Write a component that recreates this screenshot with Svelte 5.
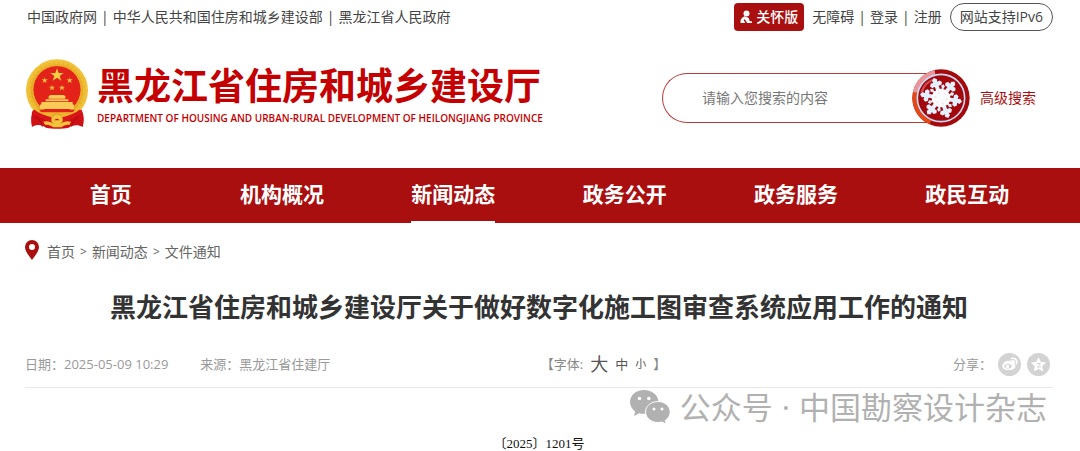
<script lang="ts">
  const siteLinks = ['中国政府网', '中华人民共和国住房和城乡建设部', '黑龙江省人民政府']
  const userLinks = ['无障碍', '登录', '注册']
  const navItems = ['首页', '机构概况', '新闻动态', '政务公开', '政务服务', '政民互动']
  const crumbs = ['首页', '新闻动态', '文件通知']
  const arms = [0, 60, 120, 180, 240, 300]

  let active = $state('新闻动态')
  let keyword = $state('')
</script>

<div class="page">
  <div class="topbar wrap">
    <div class="links">
      {#each siteLinks as link, i}
        {#if i > 0}<span>|</span>{/if}
        <a href="#site">{link}</a>
      {/each}
    </div>
    <div class="links">
      <button class="care" type="button">
        <svg width="12" height="14" viewBox="0 0 12 14" fill="#fff" aria-hidden="true">
          <circle cx="6.500" cy="3.400" r="3" />
          <path d="M4.500 6.200C2 7.500.5 9 .5 11.500V13h4.800L3.600 9.800l1.200-.6 2.400 3.800H12v-1.600l-2.400-.5-.8-3z" />
        </svg>
        关怀版
      </button>
      {#each userLinks as link, i}
        {#if i > 0}<span>|</span>{/if}
        <a href="#user">{link}</a>
      {/each}
      <a class="pill" href="#ipv6">网站支持IPv6</a>
    </div>
  </div>

  <header class="header wrap">
    <a class="brand" href="#home">
      <svg width="64" height="70" viewBox="30 24 192 210" aria-hidden="true">
        <path d="M56 172c-8 18-10 38-5 56 14-8 28-8 42 2 20 4 48 4 68 0 14-8 28-10 42-2 6-18 4-40-6-56z" fill="#cf1015" />
        <circle cx="126" cy="118" r="89" fill="#e6ab23" stroke="#f0c33a" stroke-width="8" />
        <circle cx="126" cy="118" r="82" fill="none" stroke="#eebc35" stroke-width="8" stroke-dasharray="12 2" />
        <circle cx="126" cy="116" r="72" fill="#e3221a" stroke="#f3c433" stroke-width="2" />
        <path d="M126 52l5 14h15l-12 9 5 14-13-9-13 9 5-14-12-9h15z" fill="#f6cf45" />
        <g fill="#f0b93a">
          <path id="star" d="M89 79l2 6h7l-5 4 2 7-6-4-6 4 2-7-5-4h7z" />
          <use href="#star" x="75" />
          <use href="#star" x="22" y="22" />
          <use href="#star" x="52" y="22" />
        </g>
        <path d="M101 135l6-3h38l6 3v8h-50zM92 145h68v6H92zM79 153h94v6l4 3v12H75v-12l4-3z" fill="#f7cb55" />
        <path d="M72 176h108l-8 9H80z" fill="#e3221a" />
        <path d="M75 184h102c-14 15-30 19-51 19s-37-4-51-19z" fill="#efb42c" />
        <path d="M54 180c16 14 36 20 56 25M198 180c-16 14-36 20-56 25" fill="none" stroke="#d8161a" stroke-width="12" />
        <path d="M62 194c10 10 18 20 20 33M190 194c-10 10-18 20-20 33" fill="none" stroke="#a90c10" stroke-width="3" />
        <circle cx="126" cy="206" r="17" fill="#f3c33b" stroke="#d08c1c" stroke-width="2" />
        <path d="M118 208a9 9 0 0 1 16 0z" fill="#d8161a" />
        <path d="M85 212c12-4 22 0 30 6h22c8-6 18-10 31-6l-5 10c-10-2-16 2-24 7h-24c-8-5-15-9-25-7z" fill="#f3c33b" />
      </svg>
      <span class="names">
        <strong>黑龙江省住房和城乡建设厅</strong>
        <small>DEPARTMENT OF HOUSING AND URBAN-RURAL DEVELOPMENT OF HEILONGJIANG PROVINCE</small>
      </span>
    </a>
    <form class="search" onsubmit={(event) => event.preventDefault()}>
      <input type="search" aria-label="搜索" placeholder="请输入您搜索的内容" bind:value={keyword} />
      <button type="submit" aria-label="搜索">
        <svg width="58" height="58" viewBox="21 21 174 174" aria-hidden="true">
          <circle cx="108" cy="108" r="86" fill="#a5090c" />
          <path d="M24 90a86 86 0 0 0 50 97l5-13a72 72 0 0 1-41-83z" fill="#e44718" />
          <path d="M24 90a86 86 0 0 1 65-66l2 15a72 72 0 0 0-53 53z" fill="#eb969b" />
          <circle cx="108" cy="108" r="71" fill="#a3070b" stroke="#c5dcf7" stroke-width="5" />
          <path d="M46 91a62 62 0 0 1 45-43l1 6a54 54 0 0 0-39 39z" fill="#cf5054" />
          <g fill="#e3f0ff">
            {#each arms as angle}
              <path
                d="M102 84V71h-9l-4-7 5-7 8 1-2-7 8-7 8 7-2 7 8-1 5 7-4 7h-9v13z"
                transform="rotate({angle - 20} 108 108)"
              />
              <path d="M108 66l6 6-3 5v10h-6V77l-3-5z" transform="rotate({angle + 10} 108 108)" />
            {/each}
          </g>
          <circle cx="108" cy="108" r="28" fill="#f9fbff" />
          <g stroke="#f3cbc4" stroke-width="2">
            {#each arms as angle}
              <path d="M108 87v7" transform="rotate({angle - 20} 108 108)" />
            {/each}
          </g>
        </svg>
      </button>
      <a href="#advanced">高级搜索</a>
    </form>
  </header>

  <nav class="nav">
    <ul class="wrap">
      {#each navItems as item}
        <li>
          <a href="#nav" class:active={item === active} onclick={() => (active = item)}>{item}</a>
        </li>
      {/each}
    </ul>
  </nav>

  <main class="wrap">
    <div class="crumbs">
      <svg width="14" height="20" viewBox="0 0 14 20" aria-hidden="true">
        <path d="M7 0a7 7 0 0 1 7 7c0 4-4 9-7 13C4 16 0 11 0 7a7 7 0 0 1 7-7z" fill="#a90f0f" />
        <circle cx="7" cy="7" r="3" fill="#fff" />
      </svg>
      {#each crumbs as crumb, i}
        {#if i > 0}<span>&gt;</span>{/if}
        <a href="#crumb">{crumb}</a>
      {/each}
    </div>

    <h1>黑龙江省住房和城乡建设厅关于做好数字化施工图审查系统应用工作的通知</h1>

    <div class="meta">
      <div class="source">
        <span>日期：2025-05-09 10:29</span>
        <span>来源：黑龙江省住建厅</span>
      </div>
      <div class="sizes">
        <span>【字体:</span>
        <button class="large" type="button">大</button>
        <button type="button">中</button>
        <button class="small" type="button">小</button>
        <span>】</span>
      </div>
      <div class="share">
        <span>分享：</span>
        <a href="#weibo" aria-label="微博">
          <svg width="23" height="23" viewBox="0 0 23 23" aria-hidden="true">
            <circle cx="11.500" cy="11.500" r="11.500" fill="#d3d3d3" />
            <path d="M10 8c2-1 3.500-.5 3.200 1.200 2-.6 3.300.2 2.700 1.700 3.500 1.600 1.300 6.200-5.400 6.200C6 17.100 4 15 4.300 12.800 4.700 10.500 8.500 6.500 10 8z" fill="#fff" />
            <ellipse cx="10" cy="13.300" rx="3.600" ry="2.300" fill="#d3d3d3" />
            <circle cx="9.500" cy="13.500" r="1.700" fill="#fff" />
            <path d="M13.600 5.500c3.600-1 6 1.500 4.800 4.900M14 8c1.600-.4 2.500.6 2 2" fill="none" stroke="#fff" stroke-width="1.700" stroke-linecap="round" />
          </svg>
        </a>
        <a href="#qzone" aria-label="QQ空间">
          <svg width="23" height="23" viewBox="0 0 23 23" aria-hidden="true">
            <circle cx="11.500" cy="11.500" r="11.500" fill="#d3d3d3" />
            <path d="M11.500 4l2.300 4.900 5.300.7-3.900 3.700 1 5.300-4.700-2.600-4.700 2.600 1-5.300-3.900-3.700 5.300-.7z" fill="#fff" />
            <path d="M9.500 10.500h4L10 14h4" fill="none" stroke="#d3d3d3" />
          </svg>
        </a>
      </div>
      <div class="watermark">
        <svg width="42" height="36" viewBox="0 0 42 36" aria-hidden="true">
          <path d="M15 1C7 1 1 6.500 1 13c0 4 2 7.200 5.200 9.400L5 27l5.400-2.800c1.500.4 3 .6 4.600.6 8 0 14.500-5.300 14.500-11.900S23 1 15 1z" fill="#b1b1b1" />
          <path d="M29 12.500c-7 0-12.500 4.700-12.500 10.500S22 33.500 29 33.500c1.400 0 2.700-.2 4-.5l4.500 2.300-1.200-3.900c3-2 4.900-5 4.900-8.400 0-5.800-5.500-10.500-12.200-10.500z" fill="#b1b1b1" stroke="#fff" />
          <g fill="#fff">
            <circle cx="10.500" cy="9.500" r="1.800" />
            <circle cx="19.800" cy="9.500" r="1.800" />
            <circle cx="25" cy="20" r="1.500" />
            <circle cx="33" cy="20" r="1.500" />
          </g>
        </svg>
        <span>公众号</span><span>·</span><span>中国勘察设计杂志</span>
      </div>
    </div>

    <p class="number">〔2025〕1201号</p>
  </main>
</div>

<style>
  :global(body) {
    margin: 0;
    background: #fff;
  }
  .page {
    font-family: 'Open Sans', 'Noto Sans CJK SC', sans-serif;
    font-size: 14px;
    line-height: 20px;
    color: #444;
    overflow: hidden;
  }
  a {
    color: inherit;
    text-decoration: none;
  }
  button {
    border: 0;
    padding: 0;
    background: none;
    font: inherit;
    color: inherit;
    cursor: pointer;
  }
  svg {
    display: block;
    flex: none;
  }
  .wrap {
    margin: 0 27px 0 25px;
  }
  .topbar,
  .links,
  .header,
  .brand,
  .search,
  .crumbs,
  .source,
  .sizes,
  .share,
  .watermark {
    display: flex;
    align-items: center;
  }
  .topbar {
    justify-content: space-between;
    height: 34px;
    padding-left: 2px;
    white-space: nowrap;
  }
  .links {
    gap: 4px;
  }
  .care {
    display: flex;
    align-items: center;
    gap: 4px;
    height: 28px;
    margin-right: 4px;
    padding: 0 6px;
    border-radius: 4px;
    background: #a90f0f;
    color: #fff;
    font-weight: 500;
  }
  .pill {
    margin-left: 4px;
    padding: 3px 9px;
    border: 1px solid #555;
    border-radius: 14px;
  }
  .header {
    justify-content: space-between;
    height: 134px;
  }
  .brand {
    gap: 8px;
    margin-top: -14px;
    color: #c40000;
    white-space: nowrap;
  }
  .names {
    display: grid;
    padding-top: 4px;
  }
  .names strong {
    font-size: 37px;
    font-weight: 700;
    line-height: 44px;
  }
  .names small {
    font-size: 10px;
    font-weight: 600;
    line-height: 20px;
  }
  .search {
    margin: -7px 17px 0 0;
    color: #a90f0f;
  }
  .search input {
    box-sizing: border-box;
    width: 278px;
    height: 50px;
    padding: 0 39px;
    border: 1px solid #b93a3a;
    border-right: 0;
    border-radius: 25px 0 0 25px;
    outline: 0;
    background: #fff;
    font: inherit;
    color: #444;
  }
  .search input::placeholder {
    color: #777;
  }
  .search button {
    margin: 0 10px 0 -28px;
  }
  .nav {
    background: #a90f0f;
  }
  .nav ul {
    display: grid;
    grid-template-columns: repeat(6, 1fr);
    justify-items: center;
    padding: 0;
    list-style: none;
  }
  .nav a {
    display: block;
    padding-bottom: 1px;
    border-bottom: 2px solid transparent;
    font-size: 21px;
    font-weight: 700;
    line-height: 52px;
    color: #fff;
  }
  .nav a.active {
    border-bottom-color: #fff;
  }
  .crumbs {
    gap: 5px;
    height: 58px;
    color: #666;
  }
  .crumbs svg {
    margin: -4px 3px 0 0;
  }
  .crumbs span {
    font-size: 12px;
  }
  h1 {
    margin: 6px 0 0;
    font-size: 26px;
    font-weight: 700;
    line-height: 40px;
    text-align: center;
    color: #333;
  }
  .meta {
    position: relative;
    display: grid;
    grid-template-columns: 4fr auto 3fr;
    align-items: center;
    height: 46px;
    padding-top: 14px;
    border-bottom: 1px solid #e8e8e8;
    font-size: 13px;
    color: #999;
  }
  .source {
    gap: 32px;
  }
  .sizes {
    gap: 7px;
    color: #888;
  }
  .sizes button {
    color: #555;
  }
  .sizes .large {
    font-size: 18px;
  }
  .sizes .small {
    font-size: 11px;
  }
  .share {
    justify-content: flex-end;
    gap: 6px;
    padding-right: 3px;
  }
  /* account mark laid over the article */
  .watermark {
    position: absolute;
    top: 60px;
    right: 6px;
    gap: 9px;
    font-size: 31px;
    line-height: 40px;
    color: #b1b1b1;
    white-space: nowrap;
    pointer-events: none;
  }
  .number {
    margin: 46px 0 0;
    font-family: 'Liberation Serif', 'Noto Sans CJK SC', serif;
    font-size: 13px;
    text-align: center;
    color: #111;
  }
</style>
